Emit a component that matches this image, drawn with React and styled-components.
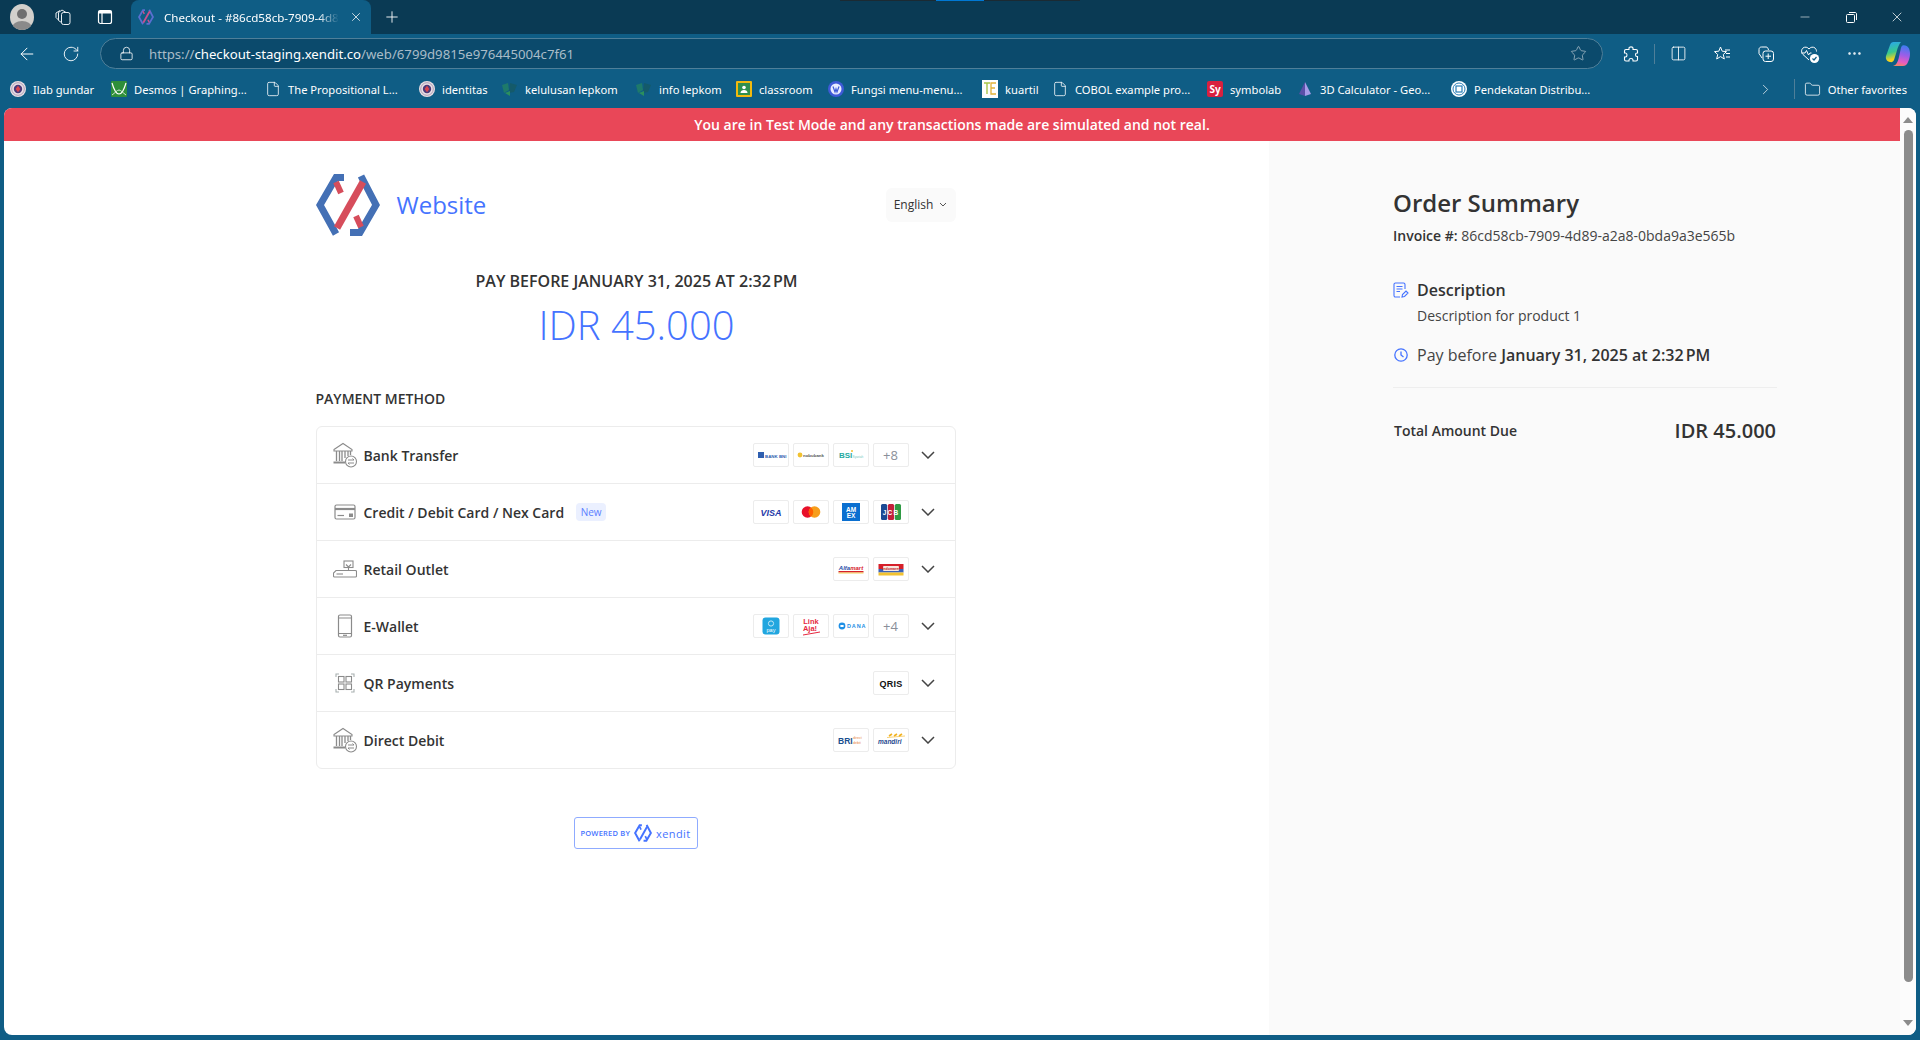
import React from 'react';
import styled, { createGlobalStyle } from 'styled-components';
import { ArrowLeft, RotateCw, Lock, Star, X, Plus, Minus, ChevronRight, Columns2, MoreHorizontal, File, Folder } from 'lucide-react';

const Global = createGlobalStyle`
  html, body { margin: 0; padding: 0; height: 100%; overflow: hidden; }
  body { font-family: "Open Sans", "Noto Sans", sans-serif; color: #333; }
  * { box-sizing: border-box; }
  svg { display: block; }
`;

const Root = styled.div`
  position: relative;
  width: 1920px; height: 1040px;
  display: flex; flex-direction: column;
  background: #0f5d85; overflow: hidden;
`;
const ShareStrip = styled.div`
  position: absolute; left: 840px; top: 0; width: 240px; height: 1px;
  background: linear-gradient(90deg, #1b2a33 0 40%, #0078d4 40% 60%, #1b2a33 60%);
`;
const TabStrip = styled.div`
  height: 34px; background: #0a3a54; display: flex; align-items: stretch; padding-left: 1px; color: #fff;
`;
const Slot = styled.div`
  width: ${p => p.$w || 44}px; flex: none; display: flex; align-items: center; justify-content: center; color: #fff;
`;
const Tab = styled.div`
  width: 240px; margin-left: 4px; background: #0f5d85; border-radius: 8px 8px 0 0;
  display: flex; align-items: center; padding: 0 8px 0 7px; gap: 10px; flex: none;
`;
const TabTitle = styled.div`
  flex: 1; min-width: 0; overflow: hidden; white-space: nowrap; font-size: 11.6px; color: #fff;
  font-family: "Noto Sans", sans-serif;
  -webkit-mask-image: linear-gradient(90deg, #000 88%, transparent);
  mask-image: linear-gradient(90deg, #000 88%, transparent);
`;
const WindowControls = styled.div`
  margin-left: auto; display: flex;
`;
const Toolbar = styled.div`
  height: 36px; display: flex; align-items: center; padding: 3px 0 0 5px;
`;
const AddressBar = styled.div`
  width: 1503px; height: 31px; margin-left: 7px; flex: none;
  background: #0b4a6c; border: 1px solid #4f7f99; border-radius: 16px;
  display: flex; align-items: center; padding: 0 15px 0 18px; color: #fff;
`;
const Url = styled.div`
  margin-left: 15px; flex: 1; font-size: 13.2px; color: #a9bcc8; white-space: nowrap;
  font-family: "Noto Sans", sans-serif;
  strong { color: #fff; font-weight: 400; }
`;
const ToolSep = styled.div`
  width: 1px; height: 20px; margin: 0 1px 0 1px; background: #4f7f99; flex: none;
`;
const BookmarkBar = styled.div`
  height: 38px; display: flex; align-items: center; padding-left: 10px; color: #fff;
  font-family: "Noto Sans", sans-serif; font-size: 11.2px;
`;
const Bookmark = styled.div`
  width: ${p => p.$w}px; flex: none; display: flex; align-items: center; gap: 7px; white-space: nowrap;
`;
const BookmarkEnd = styled.div`
  margin-left: auto; display: flex; align-items: center; padding-right: 13px; gap: 7px;
`;
const BarSep = styled.div`
  width: 1px; height: 20px; background: #4f7f99; margin: 0 2px 0 13px;
`;
const Viewport = styled.div`
  flex: 1; min-height: 0; margin: 0 4px 5px; background: #fff; border-radius: 8px;
  display: flex; overflow: hidden;
`;
const Page = styled.div`
  flex: 1; min-width: 0; display: flex; flex-direction: column;
`;
const Banner = styled.div`
  height: 33px; flex: none; background: #e94758; color: #fff;
  display: flex; align-items: center; justify-content: center; font-size: 14px; font-weight: 600;
`;
const Main = styled.div`
  flex: 1; display: grid; grid-template-columns: 1265px 1fr;
`;
const Left = styled.section`
  display: flex; justify-content: center; padding: 33px 2px 0 0;
`;
const LeftInner = styled.div`
  width: 640px; display: flex; flex-direction: column;
`;
const Header = styled.header`
  height: 62px; display: flex; align-items: center; justify-content: space-between;
`;
const Brand = styled.div`
  display: flex; align-items: center; gap: 17px; color: #4573ff; font-size: 24px;
`;
const BrandName = styled.span`
  padding-bottom: 2px;
`;
const LangButton = styled.div`
  width: 70px; height: 34px; background: #fafafa; border-radius: 6px; padding-bottom: 1px;
  display: flex; align-items: center; justify-content: center; gap: 6px; font-size: 12px; color: #333;
`;
const PayBefore = styled.div`
  margin-top: 34px; padding-left: 2px; line-height: 22px; font-size: 16px; font-weight: 600; text-align: center; color: #333;
`;
const Amount = styled.div`
  margin-top: 6px; padding-left: 2px; line-height: 54px; font-size: 40px; font-weight: 300; text-align: center; color: #4573ff;
`;
const SectionLabel = styled.div`
  margin-top: 37px; line-height: 20px; font-size: 14px; font-weight: 600; color: #333;
`;
const MethodList = styled.div`
  margin-top: 17px; border: 1px solid #ececec; border-radius: 6px; display: flex; flex-direction: column;
`;
const MethodRow = styled.div`
  height: 57px; display: flex; align-items: center; padding: 0 20px 0 15px;
  &:not(:last-child) { border-bottom: 1px solid #ececec; }
  &:last-child { height: 56px; }
`;
const MethodIcon = styled.div`
  width: 26px; height: 26px; flex: none; display: flex; align-items: center; justify-content: center; color: #8b8b8b;
`;
const MethodName = styled.div`
  margin-left: 6px; font-size: 14px; font-weight: 600; color: #333;
`;
const NewTag = styled.span`
  margin-left: 12px; height: 18px; width: 30px; border-radius: 4px; background: #ebf0ff; color: #5c80ff;
  display: flex; align-items: center; justify-content: center; font-size: 10px;
`;
const Logos = styled.div`
  margin-left: auto; display: flex; gap: 4px; margin-right: 12px;
`;
const LogoBox = styled.div`
  width: 36px; height: 24px; border: 1px solid #ececec; border-radius: 2px; background: #fff;
  display: flex; align-items: center; justify-content: center; color: #8a8f99; font-size: 13px; overflow: hidden;
`;
const Powered = styled.div`
  margin: 48px auto 0; width: 124px; height: 32px; border: 1px solid #8fabff; border-radius: 3px;
  display: flex; align-items: center; justify-content: center; gap: 4px; color: #4573ff;
`;
const PoweredText = styled.span`
  font-size: 7.5px; font-weight: 600; letter-spacing: .2px; white-space: nowrap;
`;
const PoweredBrand = styled.span`
  font-size: 11px; letter-spacing: .4px;
`;
const Right = styled.aside`
  background: #fafafa; padding: 46px 0 0 124px;
`;
const RightInner = styled.div`
  width: 384px; display: flex; flex-direction: column;
`;
const Title = styled.h1`
  margin: 0; line-height: 32px; font-size: 24px; font-weight: 600; color: #333;
`;
const Invoice = styled.div`
  margin-top: 7px; line-height: 20px; font-size: 14px; color: #444;
  b { font-weight: 600; color: #333; }
`;
const InfoLine = styled.div`
  margin-top: ${p => p.$top}px; line-height: 24px; font-size: 16px; color: #444;
  display: flex; align-items: center; gap: 8px; white-space: pre;
  b { font-weight: 600; color: #333; }
`;
const SubText = styled.div`
  margin-top: 4px; padding-left: 24px; line-height: 20px; font-size: 14px; color: #444;
`;
const Divider = styled.div`
  margin-top: 20px; height: 1px; background: #eeeeee;
`;
const TotalRow = styled.div`
  margin-top: 28px; height: 28px; display: flex; align-items: center; justify-content: space-between; padding: 0 1px;
`;
const TotalLabel = styled.span`
  font-size: 14px; font-weight: 600; color: #333;
`;
const TotalValue = styled.span`
  font-size: 20px; font-weight: 600; color: #333;
`;
const ScrollTrack = styled.div`
  width: 16px; flex: none; background: #fcfcfc; display: flex; flex-direction: column; align-items: center; padding: 9px 0;
`;
const ScrollArrow = styled.div`
  width: 0; height: 0; border-left: 5px solid transparent; border-right: 5px solid transparent;
  ${p => p.$down ? 'border-top: 6px solid #8c8c8c;' : 'border-bottom: 6px solid #8c8c8c;'}
`;
const ScrollThumb = styled.div`
  width: 9px; height: 852px; margin-top: 7px; background: #8c8c8c; border-radius: 5px;
`;
const ScrollSpacer = styled.div`flex: 1;`;

/* ---------- drawings ---------- */
const XenditMark = ({ w = 64, h = 62, blue = '#4470b5', red = '#d64d5b' }) => (
  <svg width={w} height={h} viewBox="0 0 64 62" fill="none">
    <path d="M28 3.5H20L4 31L20 60" stroke={blue} strokeWidth="7" />
    <path d="M45 2L60 31L44 58.5H34" stroke={blue} strokeWidth="7" />
    <path d="M47 8L21 54" stroke={red} strokeWidth="7" />
    <path d="M20 8L25 19" stroke={red} strokeWidth="6" />
    <path d="M40 42L45 53" stroke={red} strokeWidth="6" />
  </svg>
);
const Profile = () => (
  <svg width="24" height="26" viewBox="0 0 24 26">
    <clipPath id="pc"><ellipse cx="12" cy="13" rx="12" ry="13" /></clipPath>
    <g clipPath="url(#pc)">
      <rect width="24" height="26" fill="#d2d0cc" />
      <circle cx="12" cy="10" r="5" fill="#6f6f6f" />
      <ellipse cx="12" cy="24" rx="10" ry="7" fill="#8a8a8a" />
    </g>
  </svg>
);
const CollectionsIcon = () => (
  <svg width="18" height="18" viewBox="0 0 18 18" fill="none" stroke="#e8eef2" strokeWidth="1">
    <rect x="7.5" y="4.5" width="8.5" height="12" rx="2" />
    <path d="M7.5 14.5L4.5 12.5V4.5L8 2L12 4.5" />
    <path d="M4.5 12L2 9.5V5L6 2.5" />
  </svg>
);
const VerticalTabsIcon = () => (
  <svg width="16" height="16" viewBox="0 0 16 16" fill="none" stroke="#fff" strokeWidth="1.2">
    <rect x="1.5" y="1.5" width="13" height="13" rx="2" />
    <path d="M5 1.5V14.5" />
    <rect x="1.5" y="1.5" width="13" height="3" fill="#fff" stroke="none" />
  </svg>
);
const PuzzleIcon = () => (
  <svg width="18" height="18" viewBox="0 0 18 18" fill="none" stroke="#fff" strokeWidth="1.1">
    <path d="M7 3C7 1.5 11 1.5 11 3V4.5H14C15 4.5 15.5 5 15.5 6V8H15C13 8 13 11.5 15 11.5H15.5V14.5C15.5 15.5 15 16 14 16H11V15C11 13 7 13 7 15V16H4C3 16 2.5 15.5 2.5 14.5V12H3.5C5.5 12 5.5 8 3.5 8H2.5V6C2.5 5 3 4.5 4 4.5H7Z" />
  </svg>
);
const FavoritesIcon = () => (
  <svg width="18" height="18" viewBox="0 0 18 18" fill="none" stroke="#fff" strokeWidth="1">
    <path d="M7.5 2L9.2 6.2L13.5 6.6L10.3 9.5L11.3 14L7.5 11.6L3.7 14L4.7 9.5L1.5 6.6L5.8 6.2Z" />
    <path d="M12 5H17M13 8.5H17M13 12H17" />
  </svg>
);
const CollAddIcon = () => (
  <svg width="18" height="18" viewBox="0 0 18 18" fill="none" stroke="#fff" strokeWidth="1">
    <path d="M5 13L2 8.5V4.5C2 3 3 2 4.5 2H9C10.5 2 11 3 11.5 5" />
    <rect x="6" y="6" width="10.5" height="10.5" rx="2.5" />
    <path d="M11.2 8.5V14M8.5 11.2H14" />
  </svg>
);
const HealthIcon = () => (
  <svg width="20" height="20" viewBox="0 0 20 20" fill="none">
    <path d="M9 16L3 10.5C1 8.5 1.2 5.5 3 4C5 2.5 7.5 3 9 5C10.5 3 13 2.5 15 4C16 5 16.5 6 16.5 7.5" stroke="#fff" strokeWidth="1" />
    <path d="M1.5 9H5L6.5 6.5L8.5 11L10 9H11.5" stroke="#fff" strokeWidth="1" />
    <circle cx="14.5" cy="14.5" r="4.6" fill="#fff" />
    <path d="M12.5 14.5L14 16L16.5 13" stroke="#0f5d85" strokeWidth="1.2" />
  </svg>
);
const Copilot = () => (
  <svg width="26" height="26" viewBox="0 0 26 26">
    <defs>
      <linearGradient id="cg1" x1="0.3" y1="0" x2="0.5" y2="1"><stop offset="0" stopColor="#2aa6ea" /><stop offset=".5" stopColor="#38c98c" /><stop offset=".85" stopColor="#f2d21f" /></linearGradient>
      <linearGradient id="cg2" x1="0.6" y1="0" x2="0.4" y2="1"><stop offset="0" stopColor="#3f7cf0" /><stop offset=".45" stopColor="#9a5ee8" /><stop offset=".8" stopColor="#e85cc0" /><stop offset="1" stopColor="#f2826a" /></linearGradient>
    </defs>
    <path d="M8.5 1H16C14 3 13 6 11.5 11L9 19C8.5 20.5 7 21.5 5 21C2 20.5 .3 18 1 15L5 4C5.5 2 7 1 8.5 1Z" fill="url(#cg1)" />
    <path d="M17.5 4.5C19.5 4 22.5 4.5 24 7.5C25.5 11 25.5 16 23 21C22 23.5 20.5 25 18 25H8C11.5 24 12.5 21 13.5 18L15.5 9C16 6.5 16.5 5 17.5 4.5Z" fill="url(#cg2)" />
  </svg>
);
const Seal = ({ c = '#4b3a7a' }) => (
  <svg width="16" height="16" viewBox="0 0 16 16">
    <circle cx="8" cy="8" r="8" fill="#e9dfe4" />
    <circle cx="8" cy="8" r="6.3" fill="none" stroke="#9a8aa8" strokeWidth=".8" />
    <circle cx="8" cy="8" r="4.2" fill={c} />
    <path d="M8 4.8L10.4 8L8 11.2L5.6 8Z" fill="#d9454e" />
  </svg>
);
const Desmos = () => (
  <svg width="16" height="16" viewBox="0 0 16 16" fill="none">
    <rect width="16" height="16" rx="1" fill="#2f8f3a" />
    <path d="M1 2C3 9 5 13 8 13C11 13 13 9 15 2" stroke="#fff" strokeWidth="1.2" />
    <path d="M1 14C4 12 6 9 8 9C10 9 12 12 15 14" stroke="#cfe8d2" strokeWidth="1" />
  </svg>
);
const Leaf = () => (
  <svg width="16" height="16" viewBox="0 0 16 16">
    <path d="M0 4L6 2L7 9L2 12Z" fill="#1e7a6a" />
    <path d="M8 2L15 4L12 11L7 12Z" fill="#145a6a" />
    <path d="M3 12L8 15V10Z" fill="#2b8f5e" />
  </svg>
);
const Classroom = () => (
  <svg width="16" height="16" viewBox="0 0 16 16">
    <rect width="16" height="16" rx="1" fill="#f2b90f" />
    <rect x="2" y="2" width="12" height="12" fill="#2f8f4e" />
    <circle cx="8" cy="6.5" r="1.8" fill="#fff" />
    <path d="M4.5 12C4.5 10 6 9 8 9S11.5 10 11.5 12Z" fill="#fff" />
  </svg>
);
const Wp = () => (
  <svg width="16" height="16" viewBox="0 0 16 16">
    <circle cx="8" cy="8" r="8" fill="#3f5ad8" />
    <circle cx="8" cy="8" r="5.5" fill="#e8ecff" />
    <path d="M5 5.5L7 11L8 8L9 11L11 5.5" stroke="#3f5ad8" strokeWidth="1.2" fill="none" />
  </svg>
);
const Te = () => (
  <svg width="16" height="18" viewBox="0 0 16 18">
    <rect width="16" height="18" fill="#fff" />
    <path d="M2 3H8M5 3V14" stroke="#a8c64a" strokeWidth="1.4" />
    <path d="M14 3H9V14H14M9 8H13" stroke="#e2b23a" strokeWidth="1.3" fill="none" />
  </svg>
);
const SyBox = styled.div`
  width: 16px; height: 16px; background: #d9203f; border-radius: 2px; color: #fff;
  font-size: 10px; font-weight: 700; display: flex; align-items: center; justify-content: center;
`;
const Sy = () => <SyBox>Sy</SyBox>;
const Pyramid = () => (
  <svg width="16" height="16" viewBox="0 0 16 16">
    <path d="M8 1L2 13L8 15Z" fill="#5a4fa8" />
    <path d="M8 1L14 13L8 15Z" fill="#a79be8" />
  </svg>
);
const SealBlue = () => (
  <svg width="16" height="16" viewBox="0 0 16 16" fill="none">
    <circle cx="8" cy="8" r="8" fill="#fff" />
    <circle cx="8" cy="8" r="6" stroke="#2a7fb8" strokeWidth="1" />
    <rect x="5" y="5" width="6" height="6" stroke="#2a7fb8" strokeWidth="1.2" />
  </svg>
);
const Doc = () => <File size={16} strokeWidth={1.2} color="#fff" />;

const BankIcon = () => (
  <svg width="26" height="26" viewBox="0 0 26 26" fill="none" stroke="#8b8b8b" strokeWidth="1.1">
    <path d="M2 7.5L11 1.5L20 7.5V9H2Z" />
    <path d="M4.5 9V19M7.5 9V19M10 9V19M13 9V16M16 9V14M18.5 9V13" strokeWidth="1.3" />
    <path d="M1.5 20.5H13" strokeWidth="2" />
    <circle cx="19" cy="19.5" r="5.5" fill="#fff" />
    <path d="M16 18H22L20.5 16.5M22 21H16L17.5 22.5" strokeWidth="1" />
  </svg>
);
const CardIcon = () => (
  <svg width="22" height="16" viewBox="0 0 22 16" fill="none" stroke="#8b8b8b" strokeWidth="1.2">
    <rect x="1" y="1" width="20" height="14" rx="1.5" />
    <path d="M1 5H21" strokeWidth="2.2" />
    <path d="M3.5 11.5H10" />
    <rect x="15" y="9.5" width="4" height="3.5" fill="#8b8b8b" stroke="none" />
  </svg>
);
const RetailIcon = () => (
  <svg width="24" height="18" viewBox="0 0 24 18" fill="none" stroke="#8b8b8b" strokeWidth="1.1">
    <rect x="11" y="1" width="9" height="6.5" />
    <path d="M15.5 7.5V10M13 4.5L15.5 7L18 4.5" />
    <path d="M3 10.5H22.5C23 10.5 23.5 11 23.5 11.5V16C23.5 16.5 23 17 22.5 17H1.5C1 17 .5 16.5 .5 16V13Z" />
    <path d="M3.5 14H10" />
  </svg>
);
const PhoneIcon = () => (
  <svg width="16" height="24" viewBox="0 0 16 24" fill="none" stroke="#8b8b8b" strokeWidth="1.2">
    <rect x="1.5" y="1" width="13" height="22" rx="1.5" />
    <path d="M1.5 4H14.5M1.5 19.5H14.5" />
    <path d="M6 21.3H10" />
  </svg>
);
const QrIcon = () => (
  <svg width="20" height="20" viewBox="0 0 20 20" fill="none" stroke="#8b8b8b" strokeWidth="1.1">
    <path d="M1 4V1H4M16 1H19V4M1 16V19H4M16 19H19V16" stroke="#a8b0b0" />
    <rect x="3.5" y="3.5" width="5.5" height="5.5" />
    <rect x="11" y="3.5" width="5.5" height="5.5" />
    <rect x="3.5" y="11" width="5.5" height="5.5" />
    <rect x="11" y="11" width="5.5" height="5.5" />
  </svg>
);
const DocIcon = () => (
  <svg width="16" height="16" viewBox="0 0 16 16" fill="none" stroke="#4573ff" strokeWidth="1.1">
    <path d="M7 15H2.5C1.6 15 1 14.4 1 13.5V2.5C1 1.6 1.6 1 2.5 1H10.5C11.4 1 12 1.6 12 2.5V7" />
    <path d="M3.5 4.5H9.5M3.5 7H9.5M3.5 9.5H7" />
    <path d="M9 15L9.5 12.5L13 9L15 11L11.5 14.5Z" />
  </svg>
);
const ClockIcon = () => (
  <svg width="16" height="16" viewBox="0 0 16 16" fill="none" stroke="#4573ff" strokeWidth="1.3">
    <circle cx="8" cy="8" r="6.2" />
    <path d="M8 4.5V8L10.5 10" />
  </svg>
);
const RowChevron = () => (
  <svg width="14" height="8" viewBox="0 0 14 8" fill="none" stroke="#444" strokeWidth="1.5">
    <path d="M1 1L7 7L13 1" />
  </svg>
);
const SmallChevron = () => (
  <svg width="8" height="5" viewBox="0 0 8 5" fill="none" stroke="#555" strokeWidth="1">
    <path d="M1 1L4 4L7 1" />
  </svg>
);

/* payment logos: drawing + real text */
const LogoSvg = ({ children }) => <svg width="34" height="22" viewBox="0 0 34 22">{children}</svg>;
const LOGOS = {
  bni: <LogoSvg><rect x="4" y="8" width="6" height="6" fill="#2f5fb0" /><text x="11" y="13.5" fontSize="4.4" fontWeight="700" fill="#2f5fb0" fontFamily="Liberation Sans">BANK BNI</text></LogoSvg>,
  nobu: <LogoSvg><circle cx="6" cy="11" r="2.4" fill="#f2c230" /><text x="9" y="12.8" fontSize="4.4" fontWeight="700" fill="#555" fontFamily="Liberation Sans">nobubank</text></LogoSvg>,
  bsi: <LogoSvg><text x="5" y="14" fontSize="8" fontWeight="700" fill="#25a9a0" fontFamily="Liberation Sans">BSI</text><text x="18.5" y="13.5" fontSize="3.2" fill="#7cc9c2" fontFamily="Liberation Sans">Syariah</text><circle cx="18" cy="7" r="1" fill="#f2c230" /></LogoSvg>,
  visa: <LogoSvg><text x="17" y="14.8" textAnchor="middle" fontSize="9" fontWeight="700" fontStyle="italic" fill="#1f3aa8" fontFamily="Liberation Sans">VISA</text></LogoSvg>,
  mc: <LogoSvg><circle cx="13.5" cy="11" r="5.8" fill="#e8102a" /><circle cx="20.5" cy="11" r="5.8" fill="#f79e1b" /><path d="M17 6.4a5.8 5.8 0 0 1 0 9.2a5.8 5.8 0 0 1 0-9.2Z" fill="#ff5f00" /></LogoSvg>,
  amex: <LogoSvg><rect x="8" y="2" width="18" height="18" fill="#0a6fd0" /><text x="17" y="10.5" textAnchor="middle" fontSize="6.5" fontWeight="700" fill="#fff" fontFamily="Liberation Sans">AM</text><text x="17" y="17" textAnchor="middle" fontSize="6.5" fontWeight="700" fill="#fff" fontFamily="Liberation Sans">EX</text></LogoSvg>,
  jcb: <LogoSvg><rect x="7" y="3" width="6.2" height="16" rx="1.5" fill="#1a4a94" /><rect x="13.9" y="3" width="6.2" height="16" rx="1.5" fill="#c2203c" /><rect x="20.8" y="3" width="6.2" height="16" rx="1.5" fill="#2f9a44" /><text x="17" y="13.5" textAnchor="middle" fontSize="6.5" fontWeight="700" letterSpacing="1.2" fill="#fff" fontFamily="Liberation Sans">JCB</text></LogoSvg>,
  alfa: <LogoSvg><text x="17" y="11.5" textAnchor="middle" fontSize="6" fontWeight="700" fontStyle="italic" fill="#2a4fa8" fontFamily="Liberation Sans">Alfa<tspan fill="#d6202a">mart</tspan></text><rect x="4.5" y="13" width="25" height="1.4" fill="#d6202a" /><rect x="4.5" y="14.6" width="25" height=".8" fill="#f2c230" /></LogoSvg>,
  indo: <LogoSvg><rect x="4.5" y="6" width="25" height="5" fill="#d6202a" /><rect x="4.5" y="11" width="25" height="3.5" fill="#3a62b8" /><rect x="4.5" y="14.5" width="25" height="3" fill="#f2c230" /><rect x="9" y="8" width="16" height="5" rx="1" fill="#f7e8e0" /><text x="17" y="12" textAnchor="middle" fontSize="3.6" fontWeight="700" fill="#c21d28" fontFamily="Liberation Sans">Indomaret</text></LogoSvg>,
  ovo: <LogoSvg><rect x="8.5" y="2.5" width="17" height="17" rx="3" fill="#21a6df" /><circle cx="17" cy="8.5" r="2.6" fill="none" stroke="#bfe6f6" strokeWidth="1" /><text x="17" y="16.5" textAnchor="middle" fontSize="5.5" fill="#fff" fontFamily="Liberation Sans">pay</text></LogoSvg>,
  link: <LogoSvg><text x="17" y="9" textAnchor="middle" fontSize="7.5" fontWeight="700" fill="#e5293f" fontFamily="Liberation Sans">Link</text><text x="16" y="16" textAnchor="middle" fontSize="7.5" fontWeight="700" fill="#e5293f" fontFamily="Liberation Sans">Aja!</text><path d="M9 20L26 17" stroke="#e5293f" strokeWidth="1" /></LogoSvg>,
  dana: <LogoSvg><circle cx="8" cy="11" r="3.4" fill="#1f8fe5" /><rect x="6.4" y="10" width="3.2" height="2" fill="#fff" /><text x="13" y="13" fontSize="5.5" letterSpacing=".9" fontWeight="700" fill="#1f8fe5" fontFamily="Liberation Sans">DANA</text></LogoSvg>,
  qris: <LogoSvg><text x="17" y="14.5" textAnchor="middle" fontSize="9" fontWeight="700" letterSpacing=".3" fill="#111" fontFamily="Liberation Sans">QRIS</text></LogoSvg>,
  bri: <LogoSvg><text x="4" y="14.5" fontSize="8.5" fontWeight="700" fill="#1a4f8f" fontFamily="Liberation Sans">BRI</text><text x="19" y="10" fontSize="3.6" fill="#e98a3c" fontFamily="Liberation Sans">direct</text><text x="19" y="14.5" fontSize="3.6" fill="#e98a3c" fontFamily="Liberation Sans">debit</text></LogoSvg>,
  mandiri: <LogoSvg><path d="M15 7L18 5M20 7L23 5M25 7L28 5" stroke="#f2b21f" strokeWidth="1.6" /><path d="M13 8.5L31 7" stroke="#f2b21f" strokeWidth=".6" /><text x="4" y="15" fontSize="6.5" fontStyle="italic" fontWeight="700" fill="#1f4a8f" fontFamily="Liberation Sans">mandiri</text></LogoSvg>,
};

const METHODS = [
  { name: 'Bank Transfer', icon: <BankIcon />, logos: ['bni', 'nobu', 'bsi'], more: '+8' },
  { name: 'Credit / Debit Card / Nex Card', icon: <CardIcon />, isNew: true, logos: ['visa', 'mc', 'amex', 'jcb'] },
  { name: 'Retail Outlet', icon: <RetailIcon />, logos: ['alfa', 'indo'] },
  { name: 'E-Wallet', icon: <PhoneIcon />, logos: ['ovo', 'link', 'dana'], more: '+4' },
  { name: 'QR Payments', icon: <QrIcon />, logos: ['qris'] },
  { name: 'Direct Debit', icon: <BankIcon />, logos: ['bri', 'mandiri'] },
];

const BOOKMARKS = [
  { w: 101, t: 'Ilab gundar', f: <Seal /> },
  { w: 154, t: 'Desmos | Graphing...', f: <Desmos /> },
  { w: 154, t: 'The Propositional L...', f: <Doc /> },
  { w: 83, t: 'identitas', f: <Seal /> },
  { w: 134, t: 'kelulusan lepkom', f: <Leaf /> },
  { w: 100, t: 'info lepkom', f: <Leaf /> },
  { w: 92, t: 'classroom', f: <Classroom /> },
  { w: 154, t: 'Fungsi menu-menu...', f: <Wp /> },
  { w: 70, t: 'kuartil', f: <Te /> },
  { w: 155, t: 'COBOL example pro...', f: <Doc /> },
  { w: 90, t: 'symbolab', f: <Sy /> },
  { w: 154, t: '3D Calculator - Geo...', f: <Pyramid /> },
  { w: 150, t: 'Pendekatan Distribu...', f: <SealBlue /> },
];

export default function App() {
  return (
    <Root>
      <Global />
      <ShareStrip />
      <TabStrip>
        <Slot $w={42}><Profile /></Slot>
        <Slot $w={40}><CollectionsIcon /></Slot>
        <Slot $w={44}><VerticalTabsIcon /></Slot>
        <Tab>
          <XenditMark w={16} h={16} blue="#5a6fd0" red="#c9518f" />
          <TabTitle>Checkout - #86cd58cb-7909-4d89-a2a8</TabTitle>
          <X size={14} strokeWidth={1.3} color="#fff" />
        </Tab>
        <Slot $w={42}><Plus size={18} strokeWidth={1.2} /></Slot>
        <WindowControls>
          <Slot $w={46}><Minus size={14} strokeWidth={1} /></Slot>
          <Slot $w={46}>
            <svg width="11" height="11" viewBox="0 0 11 11" fill="none" stroke="#fff" strokeWidth="1">
              <rect x=".5" y="2.5" width="8" height="8" rx="1" />
              <path d="M3 .5H9C10 .5 10.5 1 10.5 2V8" />
            </svg>
          </Slot>
          <Slot $w={46}><X size={16} strokeWidth={1.1} /></Slot>
        </WindowControls>
      </TabStrip>
      <Toolbar>
        <Slot><ArrowLeft size={20} strokeWidth={1.2} /></Slot>
        <Slot><RotateCw size={18} strokeWidth={1.2} /></Slot>
        <AddressBar>
          <Lock size={15} strokeWidth={1.3} />
          <Url>https://<strong>checkout-staging.xendit.co</strong>/web/6799d9815e976445004c7f61</Url>
          <Star size={17} strokeWidth={1.1} color="#a9bcc8" />
        </AddressBar>
        <Slot $w={6} />
        <Slot><PuzzleIcon /></Slot>
        <ToolSep />
        <Slot><Columns2 size={17} strokeWidth={1.2} /></Slot>
        <Slot><FavoritesIcon /></Slot>
        <Slot><CollAddIcon /></Slot>
        <Slot><HealthIcon /></Slot>
        <Slot><MoreHorizontal size={17} strokeWidth={1.5} /></Slot>
        <Slot><Copilot /></Slot>
      </Toolbar>
      <BookmarkBar>
        {BOOKMARKS.map(b => (
          <Bookmark key={b.t} $w={b.w}>{b.f}<span>{b.t}</span></Bookmark>
        ))}
        <BookmarkEnd>
          <ChevronRight size={17} strokeWidth={1.2} color="#d5e0e7" />
          <BarSep />
          <Folder size={17} strokeWidth={1.1} color="#fff" />
          <span>Other favorites</span>
        </BookmarkEnd>
      </BookmarkBar>
      <Viewport>
        <Page>
          <Banner>You are in Test Mode and any transactions made are simulated and not real.</Banner>
          <Main>
            <Left>
              <LeftInner>
                <Header>
                  <Brand><XenditMark /><BrandName>Website</BrandName></Brand>
                  <LangButton>English <SmallChevron /></LangButton>
                </Header>
                <PayBefore>PAY BEFORE JANUARY 31, 2025 AT 2:32{'\u202F'}PM</PayBefore>
                <Amount>IDR 45.000</Amount>
                <SectionLabel>PAYMENT METHOD</SectionLabel>
                <MethodList>
                  {METHODS.map(m => (
                    <MethodRow key={m.name}>
                      <MethodIcon>{m.icon}</MethodIcon>
                      <MethodName>{m.name}</MethodName>
                      {m.isNew && <NewTag>New</NewTag>}
                      <Logos>
                        {m.logos.map(l => <LogoBox key={l}>{LOGOS[l]}</LogoBox>)}
                        {m.more && <LogoBox>{m.more}</LogoBox>}
                      </Logos>
                      <RowChevron />
                    </MethodRow>
                  ))}
                </MethodList>
                <Powered>
                  <PoweredText>POWERED BY</PoweredText>
                  <XenditMark w={18} h={18} blue="#4573ff" red="#4573ff" />
                  <PoweredBrand>xendit</PoweredBrand>
                </Powered>
              </LeftInner>
            </Left>
            <Right>
              <RightInner>
                <Title>Order Summary</Title>
                <Invoice><b>Invoice #:</b> 86cd58cb-7909-4d89-a2a8-0bda9a3e565b</Invoice>
                <InfoLine $top={32}><DocIcon /><b>Description</b></InfoLine>
                <SubText>Description for product 1</SubText>
                <InfoLine $top={17}><ClockIcon /><span>Pay before <b>January 31, 2025 at 2:32{'\u202F'}PM</b></span></InfoLine>
                <Divider />
                <TotalRow>
                  <TotalLabel>Total Amount Due</TotalLabel>
                  <TotalValue>IDR 45.000</TotalValue>
                </TotalRow>
              </RightInner>
            </Right>
          </Main>
        </Page>
        <ScrollTrack>
          <ScrollArrow />
          <ScrollThumb />
          <ScrollSpacer />
          <ScrollArrow $down />
        </ScrollTrack>
      </Viewport>
    </Root>
  );
}
